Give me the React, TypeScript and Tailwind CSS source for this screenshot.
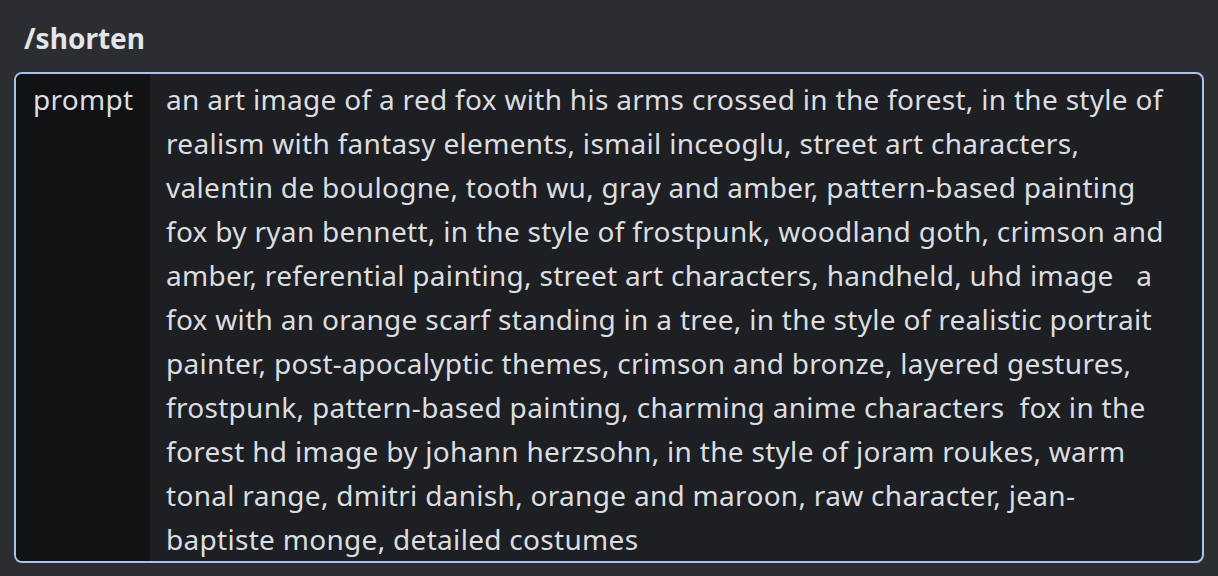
const lines = [
  "an art image of a red fox with his arms crossed in the forest, in the style of",
  "realism with fantasy elements, ismail inceoglu, street art characters,",
  "valentin de boulogne, tooth wu, gray and amber, pattern-based painting",
  "fox by ryan bennett, in the style of frostpunk, woodland goth, crimson and",
  "amber, referential painting, street art characters, handheld, uhd image   a",
  "fox with an orange scarf standing in a tree, in the style of realistic portrait",
  "painter, post-apocalyptic themes, crimson and bronze, layered gestures,",
  "frostpunk, pattern-based painting, charming anime characters  fox in the",
  "forest hd image by johann herzsohn, in the style of joram roukes, warm",
  "tonal range, dmitri danish, orange and maroon, raw character, jean-",
  "baptiste monge, detailed costumes",
];

export default function App() {
  return (
    <div className="h-[576px] w-[1218px] overflow-hidden bg-[#2b2d31] pl-[14px] pr-[14px] pt-[22px] font-['Noto_Sans',sans-serif] text-[#dbdee1]">
      <h1 className="pl-[10px] text-[28px] font-bold leading-[32px] text-[#e3e5e8]">/shorten</h1>
      <div className="mt-[18px] flex overflow-hidden rounded-[8px] border-2 border-[#a6c4f2] bg-[#1e1f22]">
        <div className="w-[134px] shrink-0 bg-[#111214] pl-[17px] pt-[3px] text-[28px] leading-[44px] tracking-[0.3px]">
          prompt
        </div>
        <div className="flex-1 pl-[16px] pt-[3px] text-[28px] leading-[44px] tracking-[0.3px]">
          {lines.map((l, i) => (
            <span key={i} className="block whitespace-pre">
              {l}
            </span>
          ))}
        </div>
      </div>
    </div>
  );
}
